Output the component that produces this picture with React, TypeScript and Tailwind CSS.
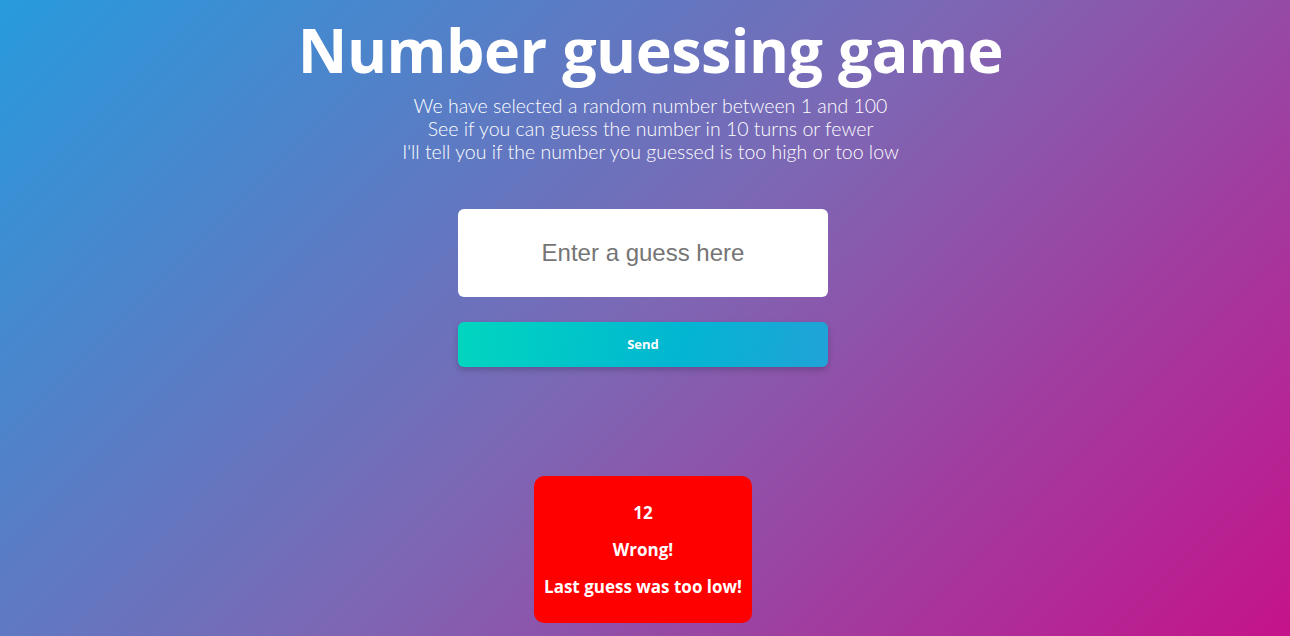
export default function App() {
  return (
    <div className="min-h-screen w-full bg-[linear-gradient(135deg,#279bdd_0%,#7d67b4_50%,#c5128a_100%)] flex flex-col items-center pr-[4px] font-['Open_Sans',sans-serif] text-white">
      {/* Heading */}
      <div className="flex flex-col items-center pl-[15px]">
        <h1 className="mt-[12px] text-[61px] leading-[76px] font-bold tracking-[-0.5px]">
          Number guessing game
        </h1>
        <div className="mt-[6px] flex flex-col items-center text-[19.5px] leading-[23px] font-light font-['Lato',sans-serif]">
          <p>We have selected a random number between 1 and 100</p>
          <p>See if you can guess the number in 10 turns or fewer</p>
          <p>I'll tell you if the number you guessed is too high or too low</p>
        </div>
      </div>

      {/* Form */}
      <form
        className="mt-[46px] w-[370px] flex flex-col gap-[25px]"
        onSubmit={(e) => e.preventDefault()}
      >
        <input
          type="text"
          placeholder="Enter a guess here"
          className="h-[88px] w-full rounded-[6px] bg-white text-center text-[24px] font-['Liberation_Sans',Arial,sans-serif] text-gray-800 placeholder:text-[#757575] outline-none"
        />
        <button
          type="submit"
          className="h-[45px] w-full rounded-[6px] bg-[linear-gradient(100deg,#00d6bf_0%,#02b6d2_60%,#21a2d8_100%)] text-[13px] font-bold text-white shadow-[0_3px_6px_rgba(0,0,0,0.2)]"
        >
          Send
        </button>
      </form>

      {/* Result */}
      <div className="mt-[109px] flex flex-col items-center gap-[14px] rounded-[10px] bg-[#ff0000] px-[10px] pt-[25px] pb-[25px] text-[17px] font-bold leading-[23px]">
        <p>12</p>
        <p>Wrong!</p>
        <p>Last guess was too low!</p>
      </div>
    </div>
  );
}
